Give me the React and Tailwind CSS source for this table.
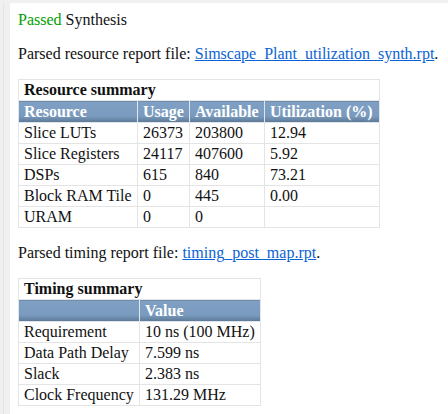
import React from "react";

const hdr =
  "bg-[linear-gradient(#7fa0c3_0%,#7a9bbf_70%,#5c7793_100%)] text-white font-bold text-left px-[5px] py-[1px] border border-[#dfe5ec] leading-[19px]";
const td = "px-[5px] py-[1px] border border-[#e4e4e4] leading-[18px] text-left font-normal";

export default function App() {
  const res = [
    ["Slice LUTs", "26373", "203800", "12.94"],
    ["Slice Registers", "24117", "407600", "5.92"],
    ["DSPs", "615", "840", "73.21"],
    ["Block RAM Tile", "0", "445", "0.00"],
    ["URAM", "0", "0", ""],
  ];
  const tim = [
    ["Requirement", "10 ns (100 MHz)"],
    ["Data Path Delay", "7.599 ns"],
    ["Slack", "2.383 ns"],
    ["Clock Frequency", "131.29 MHz"],
  ];
  return (
    <div className="h-[414px] overflow-hidden bg-[#f0f0f0] pt-[3px] text-[16px] text-[#111] font-['Liberation_Serif','Times_New_Roman',serif]">
      <div className="flex h-full">
        <div className="w-[3px]" />
        <div className="w-[7px] border-l border-[#e4e4e4]" />
        <div className="flex-1 bg-white pl-[8px] pt-[8px]">
          <p className="leading-[18px]">
            <span className="text-[#00a000]">Passed</span> Synthesis
          </p>
          <p className="mt-[16px] leading-[18px]">
            Parsed resource report file:{" "}
            <a className="text-[#0a63d5] underline">Simscape_Plant_utilization_synth.rpt</a>.
          </p>
          <table className="mt-[16px] border-collapse border border-[#e4e4e4]">
            <thead>
              <tr>
                <th colSpan={4} className={td}>
                  <span className="font-bold">Resource summary</span>
                </th>
              </tr>
              <tr>
                <th className={hdr + " w-[119px]"}>Resource</th>
                <th className={hdr + " w-[51px]"}>Usage</th>
                <th className={hdr + " w-[75px]"}>Available</th>
                <th className={hdr + " w-[115px]"}>Utilization (%)</th>
              </tr>
            </thead>
            <tbody>
              {res.map((r) => (
                <tr key={r[0]}>
                  {r.map((c, i) => (
                    <td key={i} className={td}>
                      {c}
                    </td>
                  ))}
                </tr>
              ))}
            </tbody>
          </table>
          <p className="mt-[16px] leading-[18px]">
            Parsed timing report file:{" "}
            <a className="text-[#0a63d5] underline">timing_post_map.rpt</a>.
          </p>
          <table className="mt-[16px] border-collapse border border-[#e4e4e4]">
            <thead>
              <tr>
                <th colSpan={2} className={td}>
                  <span className="font-bold">Timing summary</span>
                </th>
              </tr>
              <tr>
                <th className={hdr + " w-[121px]"}></th>
                <th className={hdr + " w-[121px]"}>Value</th>
              </tr>
            </thead>
            <tbody>
              {tim.map((r) => (
                <tr key={r[0]}>
                  {r.map((c, i) => (
                    <td key={i} className={td}>
                      {c}
                    </td>
                  ))}
                </tr>
              ))}
            </tbody>
          </table>
        </div>
      </div>
    </div>
  );
}
